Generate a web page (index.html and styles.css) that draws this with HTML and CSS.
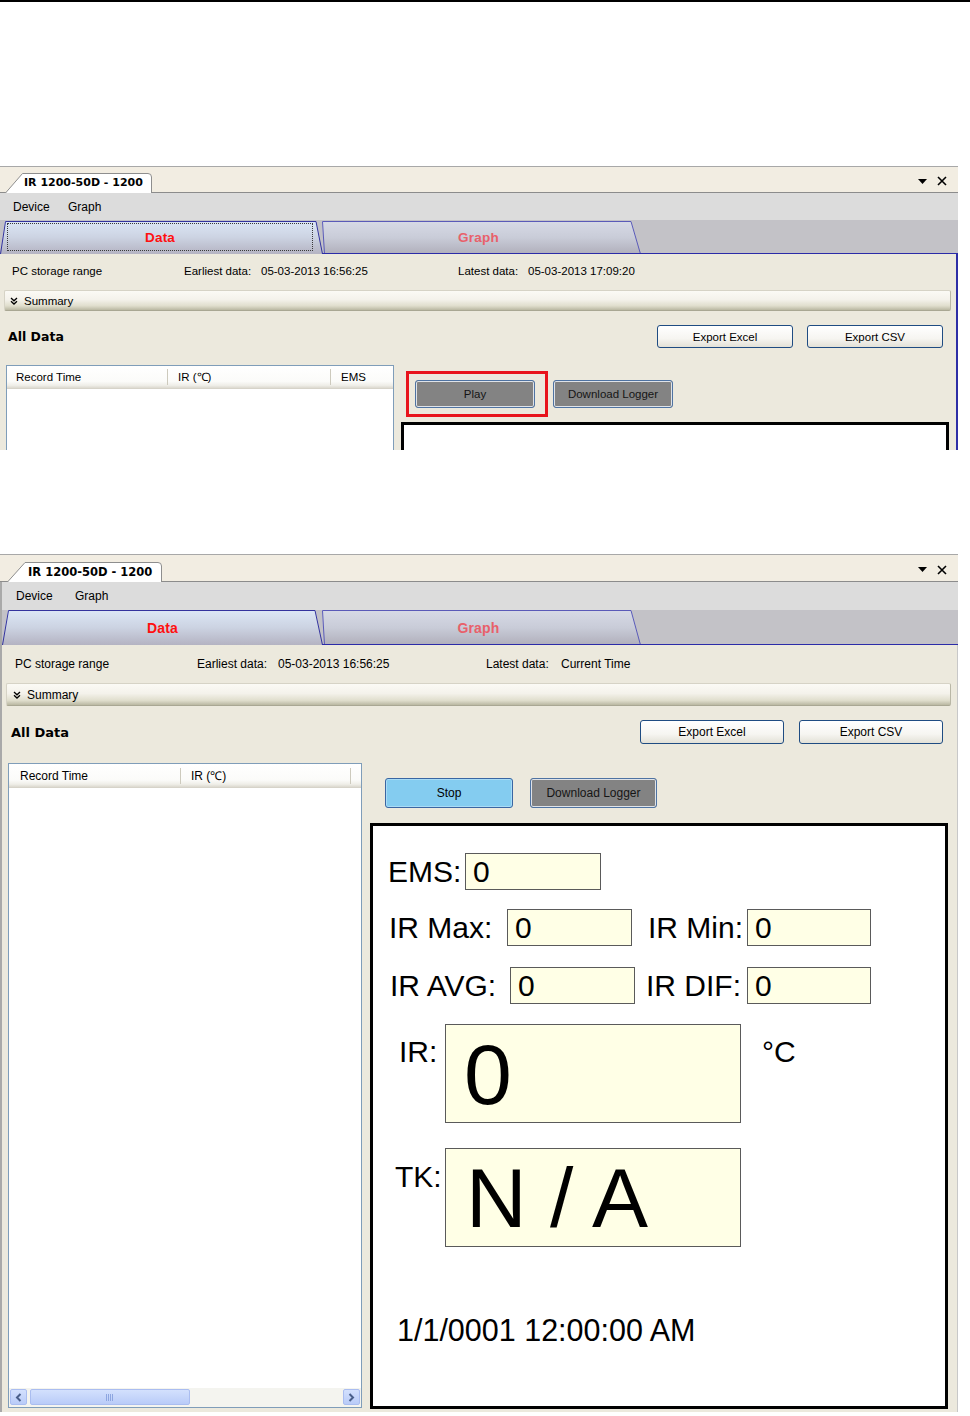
FILE: index.html
```html
<!DOCTYPE html>
<html>
<head>
<meta charset="utf-8">
<title>IR 1200-50D - 1200</title>
<link rel="stylesheet" href="styles.css">
</head>
<body>
<div class="topline"></div>

<section class="win shot1">
  <div class="titlebar">
    <div class="doctab">
      <svg class="doctab-bg" viewBox="0 0 147 21" preserveAspectRatio="none"><path d="M0.5,21 L17.5,1.5 L143,1.5 Q146.5,1.5 146.5,5 L146.5,21" fill="#fff" stroke="#8e8e8e"/></svg>
      <span class="doctab-label">IR 1200-50D - 1200</span>
    </div>
    <div class="winctrls">
      <svg width="9" height="5" viewBox="0 0 9 5"><path d="M0,0 L9,0 L4.5,5 Z" fill="#000"/></svg>
      <svg width="10" height="10" viewBox="0 0 10 10"><path d="M1,1 L9,9 M9,1 L1,9" stroke="#000" stroke-width="1.6"/></svg>
    </div>
  </div>
  <div class="menubar"><span class="menu-item m-device">Device</span><span class="menu-item">Graph</span></div>
  <div class="tabstrip">
    <div class="tab tab-data">
      <svg class="tab-bg" viewBox="0 0 323 33" preserveAspectRatio="none">
        <defs><linearGradient id="g1d" x1="0" y1="0" x2="0" y2="1"><stop offset="0" stop-color="#dce7f6"/><stop offset="0.5" stop-color="#ccd3e2"/><stop offset="1" stop-color="#b4b3c2"/></linearGradient></defs>
        <path d="M0,33 L5,0 L316,0 L323,33 Z" fill="url(#g1d)"/>
        <path d="M0.5,33 L5.5,0.5 L316,0.5 L322.5,33" fill="none" stroke="#33339e"/>
      </svg>
      <span class="tab-label focus">Data</span>
    </div>
    <div class="tab tab-graph">
      <svg class="tab-bg" viewBox="0 0 319 33" preserveAspectRatio="none">
        <defs><linearGradient id="g1g" x1="0" y1="0" x2="0" y2="1"><stop offset="0" stop-color="#d7dae6"/><stop offset="0.5" stop-color="#c9ccd8"/><stop offset="1" stop-color="#b0afbb"/></linearGradient></defs>
        <path d="M2,33 L0,0 L309,0 L319,33 Z" fill="url(#g1g)"/>
        <path d="M2.5,33 L0.5,0.5 L309,0.5 L318.5,33" fill="none" stroke="#5a5ab8"/>
        <path d="M0,32.5 L319,32.5" stroke="#2b2ba8"/>
      </svg>
      <span class="tab-label graph">Graph</span>
    </div>
    <div class="tabstrip-rest"></div>
  </div>
  <div class="content">
    <div class="info">
      <span class="i1">PC storage range</span>
      <span class="i2">Earliest data:</span>
      <span class="i3">05-03-2013 16:56:25</span>
      <span class="i4">Latest data:</span>
      <span class="i5">05-03-2013 17:09:20</span>
    </div>
    <div class="summary">
      <svg class="chev" width="8" height="8" viewBox="0 0 8 8"><path d="M1,1 L4,3.8 L7,1 M1,4.3 L4,7.1 L7,4.3" fill="none" stroke="#000" stroke-width="1.3"/></svg>
      <span>Summary</span>
    </div>
    <div class="alldata">
      <span class="alldata-title">All Data</span>
      <div class="exports">
        <span class="btn btn-export">Export Excel</span>
        <span class="btn btn-export">Export CSV</span>
      </div>
    </div>
    <div class="main">
      <div class="listview">
        <div class="lv-head">
          <span class="lv-col c1">Record Time</span>
          <span class="lv-col c2">IR (&#8451;)</span>
          <span class="lv-col c3">EMS</span>
        </div>
        <div class="lv-body"></div>
      </div>
      <div class="rightcol">
        <div class="ctrlrow">
          <div class="redbox"><span class="btn btn-gray btn-play">Play</span></div>
          <span class="btn btn-gray btn-dl">Download Logger</span>
        </div>
        <div class="gauge"></div>
      </div>
    </div>
  </div>
</section>

<section class="win shot2">
  <div class="titlebar">
    <div class="doctab">
      <svg class="doctab-bg" viewBox="0 0 155 21" preserveAspectRatio="none"><path d="M0.5,21 L18,1.5 L151,1.5 Q154.5,1.5 154.5,5 L154.5,21" fill="#fff" stroke="#8e8e8e"/></svg>
      <span class="doctab-label">IR 1200-50D - 1200</span>
    </div>
    <div class="winctrls">
      <svg width="9" height="5" viewBox="0 0 9 5"><path d="M0,0 L9,0 L4.5,5 Z" fill="#000"/></svg>
      <svg width="10" height="10" viewBox="0 0 10 10"><path d="M1,1 L9,9 M9,1 L1,9" stroke="#000" stroke-width="1.6"/></svg>
    </div>
  </div>
  <div class="menubar"><span class="menu-item m-device">Device</span><span class="menu-item">Graph</span></div>
  <div class="tabstrip">
    <div class="tab tab-data">
      <svg class="tab-bg" viewBox="0 0 321 35" preserveAspectRatio="none">
        <defs><linearGradient id="g2d" x1="0" y1="0" x2="0" y2="1"><stop offset="0" stop-color="#dce7f6"/><stop offset="0.5" stop-color="#ccd3e2"/><stop offset="1" stop-color="#b4b3c2"/></linearGradient></defs>
        <path d="M0,35 L6,0 L313,0 L321,35 Z" fill="url(#g2d)"/>
        <path d="M0.5,35 L6.5,0.5 L313,0.5 L320.5,35" fill="none" stroke="#33339e"/>
      </svg>
      <span class="tab-label">Data</span>
    </div>
    <div class="tab tab-graph">
      <svg class="tab-bg" viewBox="0 0 319 35" preserveAspectRatio="none">
        <defs><linearGradient id="g2g" x1="0" y1="0" x2="0" y2="1"><stop offset="0" stop-color="#d7dae6"/><stop offset="0.5" stop-color="#c9ccd8"/><stop offset="1" stop-color="#b0afbb"/></linearGradient></defs>
        <path d="M2,35 L0,0 L309,0 L319,35 Z" fill="url(#g2g)"/>
        <path d="M2.5,35 L0.5,0.5 L309,0.5 L318.5,35" fill="none" stroke="#5a5ab8"/>
        <path d="M0,34.5 L319,34.5" stroke="#2b2ba8"/>
      </svg>
      <span class="tab-label graph">Graph</span>
    </div>
    <div class="tabstrip-rest"></div>
  </div>
  <div class="content">
    <div class="info">
      <span class="i1">PC storage range</span>
      <span class="i2">Earliest data:</span>
      <span class="i3">05-03-2013 16:56:25</span>
      <span class="i4">Latest data:</span>
      <span class="i5">Current Time</span>
    </div>
    <div class="summary">
      <svg class="chev" width="8" height="8" viewBox="0 0 8 8"><path d="M1,1 L4,3.8 L7,1 M1,4.3 L4,7.1 L7,4.3" fill="none" stroke="#000" stroke-width="1.3"/></svg>
      <span>Summary</span>
    </div>
    <div class="alldata">
      <span class="alldata-title">All Data</span>
      <div class="exports">
        <span class="btn btn-export">Export Excel</span>
        <span class="btn btn-export">Export CSV</span>
      </div>
    </div>
    <div class="main">
      <div class="listview">
        <div class="lv-head">
          <span class="lv-col c1">Record Time</span>
          <span class="lv-col c2">IR (&#8451;)</span>
          <span class="lv-col c3"></span>
        </div>
        <div class="lv-body"></div>
        <div class="hscroll">
          <span class="sb-btn"><svg width="7" height="9" viewBox="0 0 7 9"><path d="M5.5,1 L2,4.5 L5.5,8" fill="none" stroke="#4a5f8a" stroke-width="2"/></svg></span>
          <span class="sb-thumb"><svg width="8" height="7" viewBox="0 0 8 7"><path d="M0.5,0 V7 M2.5,0 V7 M4.5,0 V7 M6.5,0 V7" stroke="#8ea6e0" stroke-width="1"/></svg></span>
          <span class="sb-track"></span>
          <span class="sb-btn"><svg width="7" height="9" viewBox="0 0 7 9"><path d="M1.5,1 L5,4.5 L1.5,8" fill="none" stroke="#4a5f8a" stroke-width="2"/></svg></span>
        </div>
      </div>
      <div class="rightcol">
        <div class="ctrlrow">
          <span class="btn btn-stop">Stop</span>
          <span class="btn btn-gray btn-dl">Download Logger</span>
        </div>
        <div class="gauge">
          <div class="g-row r-ems">
            <span class="g-label l1">EMS:</span><span class="g-input in1">0</span>
          </div>
          <div class="g-row r-max">
            <span class="g-label l1">IR Max:</span><span class="g-input in1">0</span>
            <span class="g-label l2">IR Min:</span><span class="g-input in2">0</span>
          </div>
          <div class="g-row r-avg">
            <span class="g-label l1">IR AVG:</span><span class="g-input in1">0</span>
            <span class="g-label l2">IR DIF:</span><span class="g-input in2">0</span>
          </div>
          <div class="g-row r-big r-ir">
            <span class="g-label big-label">IR:</span>
            <span class="bigbox bb-ir">0</span>
            <span class="g-label unit">&deg;C</span>
          </div>
          <div class="g-row r-big r-tk">
            <span class="g-label big-label">TK:</span>
            <span class="bigbox bb-tk">N / A</span>
          </div>
          <div class="g-date">1/1/0001 12:00:00 AM</div>
        </div>
      </div>
    </div>
  </div>
</section>
</body>
</html>
```

FILE: styles.css
```css
* { box-sizing: border-box; }
html, body { margin: 0; padding: 0; background: #fff; }
body {
  width: 970px;
  font-family: "Liberation Sans", Arial, sans-serif;
  font-size: 12px;
  color: #000;
}
.topline { height: 2px; background: #000; }

.win { display: flex; flex-direction: column; overflow: hidden; background: #fff; }
.shot1 { margin-top: 164px; width: 958px; height: 284px; }
.shot2 { margin-top: 104px; width: 958px; height: 858px; }

/* title bar */
.titlebar {
  display: flex; align-items: flex-end; flex: none;
  background: #f2ede2;
  border-top: 1px solid #a8a8a8;
  border-bottom: 1px solid #8c8c8c;
}
.shot1 .titlebar { height: 27px; padding-left: 5px; }
.shot2 .titlebar { height: 28px; padding-left: 7px; }
.doctab { position: relative; height: 21px; margin-bottom: -1px; z-index: 1; }
.shot1 .doctab { width: 147px; }
.shot2 .doctab { width: 155px; }
.doctab-bg { position: absolute; left: 0; top: 0; width: 100%; height: 100%; }
.doctab-label {
  position: relative; display: block; white-space: nowrap;
  font-family: "DejaVu Sans", Verdana, sans-serif; font-weight: bold;
  line-height: 20px; padding-top: 1px;
}
.shot1 .doctab-label { font-size: 11px; padding-left: 19px; }
.shot2 .doctab-label { font-size: 11.5px; padding-left: 21px; }
.winctrls {
  margin-left: auto; align-self: center;
  display: flex; align-items: center; gap: 10px;
  padding-right: 11px; padding-top: 3px;
}

/* menu bar */
.menubar { display: flex; align-items: center; flex: none; background: #dcdcdc; }
.shot1 .menubar { height: 27px; padding-left: 13px; }
.shot2 .menubar { height: 28px; padding-left: 14px; border-left: 2px solid #a9a9a9; }
.shot1 .m-device { width: 55px; }
.shot2 .m-device { width: 59px; }

/* tab strip */
.tabstrip { display: flex; align-items: flex-end; flex: none; background: #c3c2c7; }
.shot1 .tabstrip { height: 34px; }
.shot2 .tabstrip { height: 35px; border-left: 2px solid #a9a9a9; }
.tab { position: relative; display: flex; }
.shot1 .tab { height: 33px; }
.shot2 .tab { height: 35px; }
.shot1 .tab-data { width: 323px; }
.shot2 .tab-data { width: 321px; }
.tab-graph { width: 319px; margin-left: -1px; }
.tab-bg { position: absolute; left: 0; top: 0; width: 100%; height: 100%; }
.tab-label {
  position: relative; flex: 1;
  display: flex; align-items: center; justify-content: center;
  font-weight: bold; font-size: 14px; color: #ff1010; letter-spacing: 0.2px;
}
.shot1 .tab-label { font-size: 13.5px; }
.tab-label.graph { color: #e8606a; padding-right: 6px; }
.tab-label.focus { margin: 2px 10px 3px 7px; border: 1px dotted #3a3a3a; }
.tabstrip-rest { flex: 1; align-self: stretch; border-bottom: 1px solid #2b2ba8; }

/* content */
.content { flex: 1; min-height: 0; display: flex; flex-direction: column; background: #ece9dd; }
.shot1 .content { border-right: 2px solid #2e2ea6; }
.shot2 .content { border-left: 2px solid #a9a9a9; border-right: 1px solid #c8c8c8; }

.info { display: flex; align-items: center; height: 20px; white-space: nowrap; flex: none; }
.shot1 .info { margin-top: 7px; padding-left: 12px; font-size: 11.5px; }
.shot1 .i1 { width: 172px; } .shot1 .i2 { width: 77px; } .shot1 .i3 { width: 197px; } .shot1 .i4 { width: 70px; }
.shot2 .info { margin-top: 9px; padding-left: 13px; }
.shot2 .i1 { width: 182px; } .shot2 .i2 { width: 81px; } .shot2 .i3 { width: 208px; } .shot2 .i4 { width: 75px; }

.summary {
  display: flex; align-items: center; gap: 6px; flex: none;
  border: 1px solid #d6d3c6; border-bottom-color: #a9a793; border-right-color: #b9b7a6;
  border-radius: 2px;
  background: linear-gradient(#fbfaf5 0%, #f4f2eb 45%, #e0decd 78%, #bab8a2 100%);
}
.shot1 .summary { margin: 9px 0 0 4px; width: 947px; height: 21px; padding-left: 5px; font-size: 11.5px; }
.shot2 .summary { margin: 9px 0 0 4px; width: 945px; height: 23px; padding-left: 6px; }

.alldata { display: flex; align-items: center; flex: none; margin-top: 14px; }
.alldata-title { font-family: "DejaVu Sans", Verdana, sans-serif; font-weight: bold; }
.shot1 .alldata-title { font-size: 12.5px; padding-left: 8px; }
.shot2 .alldata-title { font-size: 13px; padding-left: 9px; }
.exports { margin-left: auto; display: flex; }
.shot1 .exports { gap: 14px; margin-right: 13px; }
.shot2 .exports { gap: 15px; margin-right: 14px; }

.btn {
  display: flex; align-items: center; justify-content: center;
  white-space: nowrap; border-radius: 3px; font-size: 12px;
}
.shot1 .btn { font-size: 11.5px; }
.btn-export {
  border: 1px solid #1f4c82;
  background: linear-gradient(#ffffff 0%, #f6f5f1 60%, #e3e1d7 100%);
}
.shot1 .btn-export { width: 136px; height: 23px; }
.shot2 .btn-export { width: 144px; height: 24px; }
.btn-gray {
  background: #838383; color: #151515;
  border: 1px solid #4f73a2;
  box-shadow: inset 0 0 0 1px #dfe3e8;
}
.btn-stop {
  background: #84ccf0;
  border: 1px solid #3a66a2;
  box-shadow: inset 0 0 0 1px #a9dcf6;
}

/* main area */
.main { display: flex; align-items: flex-start; flex: 1; min-height: 0; }
.shot1 .main { margin-top: 17px; padding-left: 6px; gap: 7px; }
.shot2 .main { margin-top: 19px; padding-left: 6px; gap: 8px; }

.listview { display: flex; flex-direction: column; flex: none; background: #fff; border: 1px solid #7f9db9; }
.shot1 .listview { width: 388px; height: 130px; }
.shot2 .listview { width: 354px; height: 645px; }
.lv-head {
  display: flex; align-items: center; flex: none;
  background: linear-gradient(#ffffff 0%, #fbfbf9 70%, #efeee8 88%, #dcd9cf 100%);
  border-bottom: 1px solid #d6d3c9;
}
.shot1 .lv-head { height: 23px; font-size: 11.5px; }
.shot2 .lv-head { height: 24px; }
.lv-col { height: 16px; line-height: 16px; border-right: 1px solid #cdcabd; white-space: nowrap; }
.lv-col.c3 { border-right: none; flex: 1; }
.shot1 .c1 { width: 161px; padding-left: 9px; }
.shot1 .c2 { width: 163px; padding-left: 10px; }
.shot1 .c3 { padding-left: 10px; }
.shot2 .c1 { width: 172px; padding-left: 11px; }
.shot2 .c2 { width: 170px; padding-left: 10px; }
.lv-body { flex: 1; }

.hscroll {
  display: flex; align-items: center; gap: 2px; flex: none;
  height: 19px; padding: 1px 1px 2px 1px; background: #f4f4ef;
}
.sb-btn, .sb-thumb {
  display: flex; align-items: center; justify-content: center;
  height: 16px; border: 1px solid #aabdf0; border-radius: 2px;
  background: linear-gradient(#d3e0fd, #b9cbf8);
}
.sb-btn { width: 17px; }
.sb-thumb { width: 160px; margin-left: 1px; }
.sb-track { flex: 1; }

/* right column */
.rightcol { display: flex; flex-direction: column; flex: none; }
.shot1 .rightcol { width: 548px; }
.shot2 .rightcol { width: 578px; }
.ctrlrow { display: flex; align-items: flex-start; }
.shot1 .ctrlrow { margin-top: 6px; }
.shot2 .ctrlrow { margin-top: 15px; padding-left: 15px; }
.redbox { border: 3px solid #e8141c; padding: 6px 10px 6px 6px; margin-left: 5px; }
.shot1 .btn-play { width: 120px; height: 28px; }
.shot1 .btn-dl { width: 120px; height: 28px; margin: 9px 0 0 5px; }
.shot2 .btn-stop { width: 128px; height: 30px; }
.shot2 .btn-dl { width: 127px; height: 30px; margin-left: 17px; }

.gauge { border: 3px solid #000; background: #fff; }
.shot1 .gauge { margin-top: 5px; height: 200px; }
.shot2 .gauge { margin-top: 15px; height: 586px; padding-top: 27px; }

.g-row { display: flex; align-items: center; }
.g-label { font-size: 30px; line-height: 37px; white-space: nowrap; flex: none; }
.g-input {
  flex: none; height: 37px; border: 1px solid #5a5a5a; background: #ffffe6;
  font-size: 30px; line-height: 35px; padding-left: 7px;
}
.r-ems { margin-left: 15px; }
.r-ems .l1 { width: 77px; }
.r-ems .in1 { width: 136px; }
.r-max { margin-top: 19px; margin-left: 16px; }
.r-max .l1 { width: 118px; }
.r-max .in1 { width: 125px; }
.r-max .l2 { width: 99px; margin-left: 16px; }
.r-max .in2 { width: 124px; }
.r-avg { margin-top: 21px; margin-left: 17px; }
.r-avg .l1 { width: 120px; }
.r-avg .in1 { width: 125px; }
.r-avg .l2 { width: 101px; margin-left: 11px; }
.r-avg .in2 { width: 124px; }

.r-big { align-items: flex-start; }
.big-label { line-height: 34px; }
.r-ir { margin-top: 20px; margin-left: 26px; }
.r-ir .big-label { width: 46px; padding-top: 11px; }
.r-tk { margin-top: 25px; margin-left: 22px; }
.r-tk .big-label { width: 50px; padding-top: 12px; }
.unit { margin-left: 21px; padding-top: 11px; line-height: 34px; }
.bigbox {
  flex: none; display: flex; align-items: center;
  width: 296px; height: 99px;
  border: 1px solid #5a5a5a; background: #ffffe6;
  line-height: 1; white-space: pre;
}
.bb-ir { font-size: 86px; padding-left: 18px; }
.bb-tk { font-size: 84px; padding-left: 20px; }
.g-date { margin-top: 66px; margin-left: 24px; font-size: 30.5px; line-height: 34px; white-space: nowrap; }
```
